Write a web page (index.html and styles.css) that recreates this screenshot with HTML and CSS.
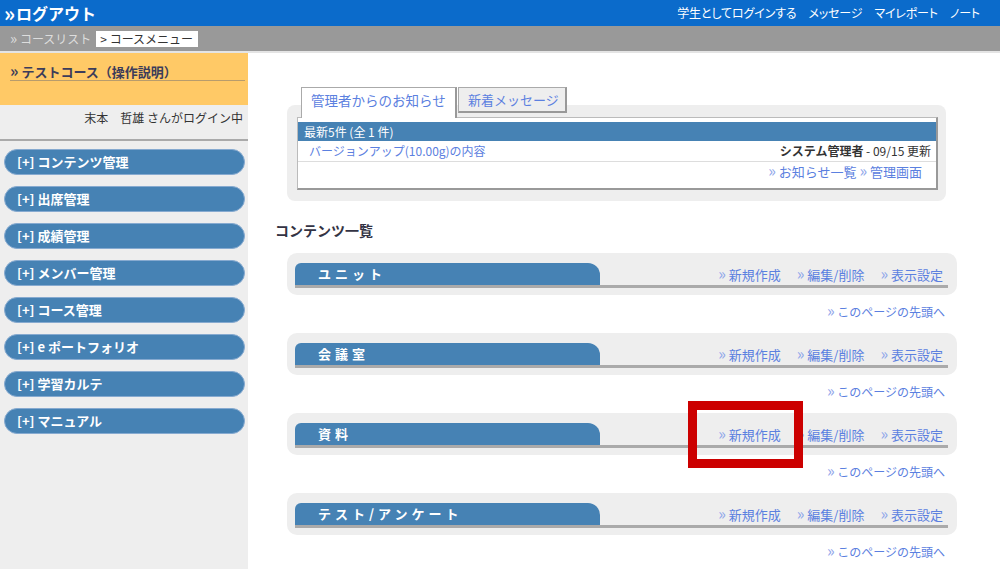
FILE: index.html
```html
<!DOCTYPE html>
<html lang="ja">
<head>
<meta charset="utf-8">
<title>コースメニュー</title>
<link rel="stylesheet" href="styles.css">
</head>
<body>
<header class="topbar">
  <a class="logout"><span class="chev">»</span>ログアウト</a>
  <nav class="toplinks">
    <a>学生としてログインする</a>
    <a>メッセージ</a>
    <a>マイレポート</a>
    <a>ノート</a>
  </nav>
</header>
<div class="crumbs">
  <span class="crumb"><span class="ch">»</span> コースリスト</span>
  <span class="crumb current">&gt; コースメニュー</span>
</div>
<div class="layout">
  <aside class="sidebar">
    <div class="course">
      <div class="course-title"><span class="chev">»</span> テストコース（操作説明）</div>
    </div>
    <div class="user">末本　哲雄 さんがログイン中</div>
    <ul class="menu">
      <li>[+] コンテンツ管理</li>
      <li>[+] 出席管理</li>
      <li>[+] 成績管理</li>
      <li>[+] メンバー管理</li>
      <li>[+] コース管理</li>
      <li>[+] e ポートフォリオ</li>
      <li>[+] 学習カルテ</li>
      <li>[+] マニュアル</li>
    </ul>
  </aside>
  <main class="main">
    <section class="news">
      <div class="tabs">
        <a class="tab active">管理者からのお知らせ</a>
        <a class="tab second">新着メッセージ</a>
      </div>
      <div class="newsbox">
        <div class="newsinner">
          <div class="newshead">最新5件 (全 1 件)</div>
          <div class="newsrow">
            <a class="link">バージョンアップ(10.00g)の内容</a>
            <span class="meta"><b>システム管理者</b> - 09/15 更新</span>
          </div>
          <div class="newslinks"><a class="link"><span class="ch">»</span> お知らせ一覧</a> <a class="link"><span class="ch">»</span> 管理画面</a></div>
        </div>
      </div>
    </section>

    <h2 class="heading">コンテンツ一覧</h2>

    <section class="block">
      <div class="block-box">
        <div class="block-head">
          <div class="block-title">ユニット</div>
          <div class="block-actions">
            <a class="link"><span class="ch">»</span> 新規作成</a>
            <a class="link"><span class="ch">»</span> 編集/削除</a>
            <a class="link"><span class="ch">»</span> 表示設定</a>
          </div>
        </div>
      </div>
      <div class="totop"><a class="link"><span class="ch">»</span> このページの先頭へ</a></div>
    </section>

    <section class="block">
      <div class="block-box">
        <div class="block-head">
          <div class="block-title">会議室</div>
          <div class="block-actions">
            <a class="link"><span class="ch">»</span> 新規作成</a>
            <a class="link"><span class="ch">»</span> 編集/削除</a>
            <a class="link"><span class="ch">»</span> 表示設定</a>
          </div>
        </div>
      </div>
      <div class="totop"><a class="link"><span class="ch">»</span> このページの先頭へ</a></div>
    </section>

    <section class="block">
      <div class="block-box">
        <div class="block-head">
          <div class="block-title">資料</div>
          <div class="block-actions">
            <a class="link"><span class="ch">»</span> 新規作成</a>
            <a class="link"><span class="ch">»</span> 編集/削除</a>
            <a class="link"><span class="ch">»</span> 表示設定</a>
          </div>
        </div>
      </div>
      <div class="totop"><a class="link"><span class="ch">»</span> このページの先頭へ</a></div>
    </section>

    <section class="block">
      <div class="block-box">
        <div class="block-head">
          <div class="block-title">テスト/アンケート</div>
          <div class="block-actions">
            <a class="link"><span class="ch">»</span> 新規作成</a>
            <a class="link"><span class="ch">»</span> 編集/削除</a>
            <a class="link"><span class="ch">»</span> 表示設定</a>
          </div>
        </div>
      </div>
      <div class="totop"><a class="link"><span class="ch">»</span> このページの先頭へ</a></div>
    </section>
  </main>
</div>
<div class="highlight"></div>
</body>
</html>
```
FILE: styles.css
```css
* { box-sizing: border-box; margin: 0; padding: 0; }

body {
  font-family: "Noto Sans CJK JP", "Noto Sans", sans-serif;
  font-size: 13px;
  line-height: 16px;
  color: #333;
  background: #fff;
  width: 1000px;
  height: 569px;
  overflow: hidden;
  position: relative;
}

a { text-decoration: none; color: inherit; }

.topbar {
  height: 26px;
  background: #0b6bcb;
  display: flex;
  align-items: center;
  justify-content: space-between;
  padding: 0 20px 0 4px;
  color: #fff;
}
.logout { font-size: 16px; font-weight: bold; line-height: 22px; display: flex; align-items: center; }
.logout .chev { font-size: 21px; line-height: 22px; margin-right: 1px; }
.toplinks { display: flex; gap: 12px; font-size: 12px; letter-spacing: -0.15px; font-feature-settings: "palt"; }

.crumbs {
  height: 27px;
  background: #999;
  border-bottom: 2px solid #e4e4e4;
  display: flex;
  align-items: center;
  padding-left: 10px;
  gap: 5px;
}
.crumb { font-size: 12px; color: #ddd; line-height: 16px; }
.crumb .ch { color: #ddd; font-size: 15px; line-height: 16px; }
.crumb.current { background: #fff; color: #333; padding: 0 5px 0 4px; }

.layout { display: flex; height: 516px; }

.sidebar { width: 248px; background: #eee; flex: none; }
.course { height: 52px; background: #ffc966; padding: 7px 3px 0 10px; }
.course-title {
  font-weight: bold;
  font-size: 13px;
  line-height: 20px;
  height: 21px;
  color: #3c3c5a;
  border-bottom: 1px solid #b89c6c;
}
.course-title .chev { font-size: 16px; line-height: 20px; }
.user {
  height: 36px;
  padding: 5px 5px 0 0;
  text-align: right;
  font-size: 12px;
  color: #333;
  border-bottom: 2px solid #aaa;
}
.menu {
  list-style: none;
  display: flex;
  flex-direction: column;
  gap: 11px;
  padding: 8px 3px 0 4px;
}
.menu li {
  height: 26px;
  border-radius: 13px;
  background: #4682b4;
  border: 1px solid #86aad0;
  color: #fff;
  font-weight: bold;
  font-size: 13px;
  line-height: 23px;
  padding-left: 12px;
}

.main { flex: 1; padding: 34px 0 0 39px; }

.news { width: 659px; }
.tabs {
  display: flex;
  align-items: flex-start;
  gap: 1px;
  padding-left: 14px;
  height: 30px;
  position: relative;
  z-index: 1;
}
.tab {
  height: 26px;
  border: 1px solid #aaa;
  border-right: 2px solid #999;
  border-bottom: 2px solid #999;
  background: #eee;
  color: #5b80e0;
  font-size: 13.5px;
  line-height: 24px;
  padding-left: 9px;
}
.tab.active {
  width: 156px;
  background: #fff;
  height: 31px;
  border-bottom: none;
  padding-left: 9px;
}
.tab.second { width: 109px; font-size: 13px; }
.newsbox {
  margin-top: -12px;
  background: #eee;
  border-radius: 8px;
  padding: 12px 8px 11px 10px;
}
.newsinner {
  background: #fff;
  border: 1px solid #bbb;
  border-right: 2px solid #999;
  border-bottom: 2px solid #999;
  padding-top: 4px;
  height: 73px;
}
.newshead {
  background: #4682b4;
  color: #fff;
  font-size: 12px;
  height: 19px;
  line-height: 19px;
  padding-left: 6px;
}
.newsrow {
  display: flex;
  justify-content: space-between;
  height: 21px;
  line-height: 20px;
  font-size: 12px;
  padding: 0 5px 0 11px;
  border-bottom: 1px solid #ddd;
}
.meta { color: #333; }
.meta b { color: #333; }
.newslinks {
  text-align: right;
  padding-right: 14px;
  line-height: 18px;
  font-size: 13px;
}

.link { color: #5b80e0; }
.ch { color: #8fa6ea; font-size: 16px; line-height: 16px; }

.heading {
  margin: 21px 0 0 -12px;
  font-size: 14px;
  line-height: 16px;
  font-weight: bold;
  color: #333344;
}
.heading + .block { margin-top: 15px; }

.block-box {
  width: 670px;
  height: 42px;
  background: #eee;
  border-radius: 10px;
  padding: 10px 9px 7px 8px;
}
.block-head {
  display: flex;
  align-items: center;
  height: 25px;
  border-bottom: 3px solid #aaa;
}
.block-title {
  width: 305px;
  height: 22px;
  background: #4682b4;
  border-radius: 6px 12px 0 0;
  color: #fff;
  font-weight: bold;
  font-size: 13px;
  letter-spacing: 4px;
  line-height: 22px;
  padding-left: 23px;
}
.block-actions {
  margin-left: auto;
  padding-right: 5px;
  display: flex;
  align-items: center;
  gap: 16px;
  font-size: 13px;
  line-height: 16px;
}
.totop {
  width: 658px;
  height: 16px;
  text-align: right;
  margin: 7px 0 15px;
  font-size: 12px;
  line-height: 16px;
}

.highlight {
  position: absolute;
  left: 688px;
  top: 401px;
  width: 115px;
  height: 67px;
  border: 9px solid #cc0000;
}
```
